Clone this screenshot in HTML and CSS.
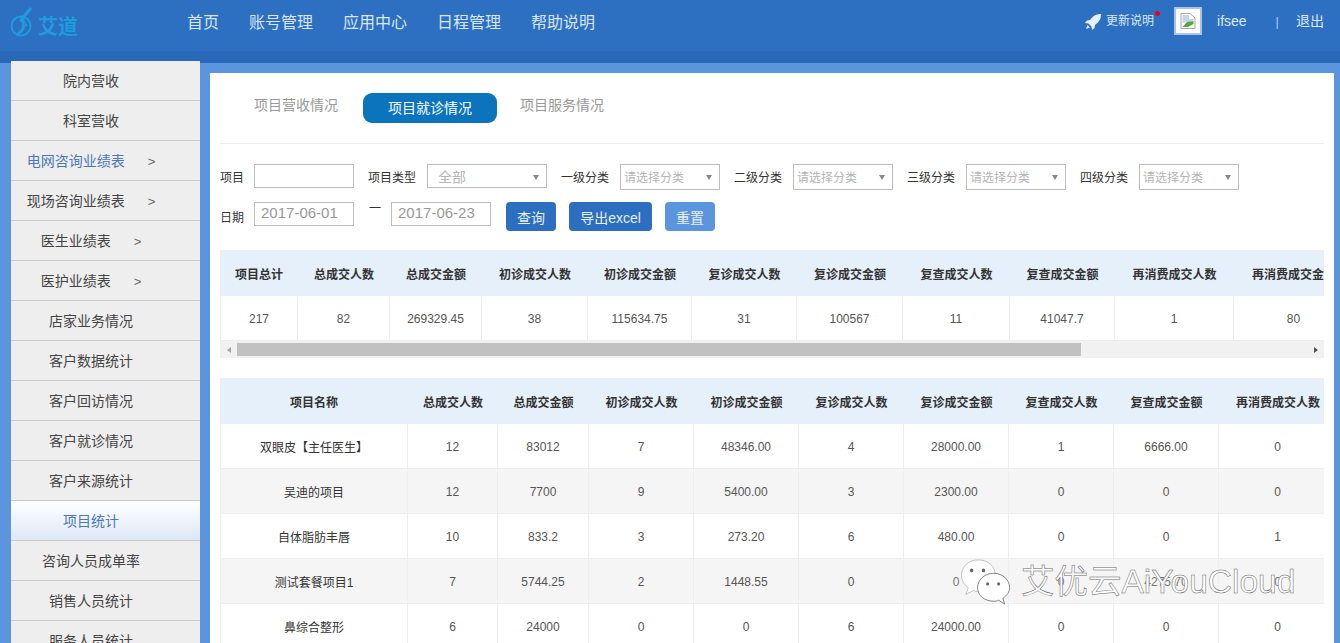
FILE: index.html
```html
<!DOCTYPE html>
<html lang="zh">
<head>
<meta charset="utf-8">
<title>项目统计</title>
<link rel="stylesheet" href="styles.css">
</head>
<body>
<header class="topbar">
  <div class="logo">
    <svg class="logo-mark" width="28" height="36" viewBox="0 0 28 36" fill="none" stroke="#1f9be0">
      <circle cx="11" cy="19" r="9.5" stroke-width="2"/>
      <path d="M8 27 C15 22 15 15 12 12 L21 1" stroke-width="3"/>
      <path d="M10 13 L17 19" stroke-width="2"/>
    </svg>
    <span class="logo-text">艾道</span>
  </div>
  <nav class="nav">
    <a>首页</a><a>账号管理</a><a>应用中心</a><a>日程管理</a><a>帮助说明</a>
  </nav>
  <div class="user">
    <svg class="rocket" width="16" height="16" viewBox="0 0 16 16" fill="#e6effa">
      <path d="M16 0 C11 0 8 2 5 6 L2 6.500 L0 9 L3.500 9.500 L6.500 12.500 L7 16 L9.500 14 L10 11 C14 8 16 5 16 0 Z"/>
      <path d="M2.500 11 L5 13.500 L1 15 Z"/>
    </svg>
    <span class="update">更新说明<i class="dot"></i></span>
    <span class="avatar">
      <svg width="16" height="16" viewBox="0 0 16 16">
        <path d="M1 .5 H10 L15 5 V15.500 H1 Z" fill="#fff" stroke="#a9a9a9"/>
        <path d="M2.500 2 H9 V6 H13.500 V8 L2.500 10 Z" fill="#c6d6f2"/>
        <path d="M2.500 14 L7 9 L13.500 8 V11 L8 14 Z" fill="#5aa53c"/>
      </svg>
    </span>
    <span class="uname">ifsee</span>
    <span class="sep">|</span>
    <span class="logout">退出</span>
  </div>
</header>

<main class="main">
  <aside class="side">
    <a class="side-item">院内营收</a>
    <a class="side-item">科室营收</a>
    <a class="side-item is-link">电网咨询业绩表<span class="caret">&gt;</span></a>
    <a class="side-item">现场咨询业绩表<span class="caret">&gt;</span></a>
    <a class="side-item">医生业绩表<span class="caret">&gt;</span></a>
    <a class="side-item">医护业绩表<span class="caret">&gt;</span></a>
    <a class="side-item">店家业务情况</a>
    <a class="side-item">客户数据统计</a>
    <a class="side-item">客户回访情况</a>
    <a class="side-item">客户就诊情况</a>
    <a class="side-item">客户来源统计</a>
    <a class="side-item is-active">项目统计</a>
    <a class="side-item">咨询人员成单率</a>
    <a class="side-item">销售人员统计</a>
    <a class="side-item">服务人员统计</a>
  </aside>

  <section class="panel">
    <div class="tabs">
      <a class="tab">项目营收情况</a>
      <a class="tab tab-on">项目就诊情况</a>
      <a class="tab">项目服务情况</a>
    </div>

    <div class="filter filter-a">
      <label class="lbl">项目</label>
      <input class="field w100" type="text">
      <label class="lbl">项目类型</label>
      <div class="field sel w120 big">全部</div>
      <label class="lbl">一级分类</label>
      <div class="field sel w100 tall">请选择分类</div>
      <label class="lbl">二级分类</label>
      <div class="field sel w100 tall">请选择分类</div>
      <label class="lbl">三级分类</label>
      <div class="field sel w100 tall">请选择分类</div>
      <label class="lbl">四级分类</label>
      <div class="field sel w100 tall">请选择分类</div>
    </div>

    <div class="filter filter-b">
      <label class="lbl">日期</label>
      <input class="field w100 date" type="text" value="2017-06-01">
      <span class="dash">一</span>
      <input class="field w100 date" type="text" value="2017-06-23">
      <button class="btn">查询</button>
      <button class="btn btn-wide">导出excel</button>
      <button class="btn btn-light">重置</button>
    </div>

    <div class="clip">
      <table class="grid sum">
        <colgroup>
          <col class="c78"><col class="c92"><col class="c92"><col class="c106"><col class="c104"><col class="c105"><col class="c106"><col class="c107"><col class="c105"><col class="c119"><col class="c120">
        </colgroup>
        <thead>
          <tr><th>项目总计</th><th>总成交人数</th><th>总成交金额</th><th>初诊成交人数</th><th>初诊成交金额</th><th>复诊成交人数</th><th>复诊成交金额</th><th>复查成交人数</th><th>复查成交金额</th><th>再消费成交人数</th><th>再消费成交金额</th></tr>
        </thead>
        <tbody>
          <tr><td>217</td><td>82</td><td>269329.45</td><td>38</td><td>115634.75</td><td>31</td><td>100567</td><td>11</td><td>41047.7</td><td>1</td><td>80</td></tr>
        </tbody>
      </table>
    </div>
    <div class="hscroll">
      <span class="arrow arrow-l"></span>
      <span class="thumb"></span>
      <span class="arrow arrow-r"></span>
    </div>

    <div class="clip list">
      <table class="grid detail">
        <colgroup>
          <col class="c188"><col class="c90"><col class="c91"><col class="c105"><col class="c105"><col class="c105"><col class="c105"><col class="c105"><col class="c105"><col class="c118">
        </colgroup>
        <thead>
          <tr><th>项目名称</th><th>总成交人数</th><th>总成交金额</th><th>初诊成交人数</th><th>初诊成交金额</th><th>复诊成交人数</th><th>复诊成交金额</th><th>复查成交人数</th><th>复查成交金额</th><th>再消费成交人数</th></tr>
        </thead>
        <tbody>
          <tr><td class="name">双眼皮【主任医生】</td><td>12</td><td>83012</td><td>7</td><td>48346.00</td><td>4</td><td>28000.00</td><td>1</td><td>6666.00</td><td>0</td></tr>
          <tr><td class="name">吴迪的项目</td><td>12</td><td>7700</td><td>9</td><td>5400.00</td><td>3</td><td>2300.00</td><td>0</td><td>0</td><td>0</td></tr>
          <tr><td class="name">自体脂肪丰唇</td><td>10</td><td>833.2</td><td>3</td><td>273.20</td><td>6</td><td>480.00</td><td>0</td><td>0</td><td>1</td></tr>
          <tr><td class="name">测试套餐项目1</td><td>7</td><td>5744.25</td><td>2</td><td>1448.55</td><td>0</td><td>0</td><td>0</td><td>4275.70</td><td>0</td></tr>
          <tr><td class="name">鼻综合整形</td><td>6</td><td>24000</td><td>0</td><td>0</td><td>6</td><td>24000.00</td><td>0</td><td>0</td><td>0</td></tr>
        </tbody>
      </table>
    </div>
  </section>
</main>

<div class="watermark">
  <svg class="wx" width="54" height="48" viewBox="0 0 64 50" preserveAspectRatio="none">
    <path d="M23 3 C11 3 3 10 3 19 C3 24 6 29 11 32 L8 39 L17 35 C19 35.500 21 36 23 36 C35 36 43 28 43 19 C43 10 35 3 23 3 Z" fill="#fff" stroke="#bbb"/>
    <circle cx="15" cy="14" r="2" fill="#666"/><circle cx="29" cy="14" r="2" fill="#666"/>
    <path d="M41 17 C30 17 22 24 22 32 C22 40 30 46 41 46 C43 46 45 46 47 45 L54 49 L52 43 C57 40 60 36 60 32 C60 24 52 17 41 17 Z" fill="#fff" stroke="#777"/>
    <circle cx="34" cy="28" r="1.800" fill="#666"/><circle cx="47" cy="28" r="1.800" fill="#666"/>
  </svg>
  <span class="wm-text">艾优云AiYouCloud</span>
</div>
</body>
</html>
```

FILE: styles.css
```css
* { box-sizing: border-box; }

html, body {
  margin: 0;
  height: 643px;
  overflow: hidden;
}

body {
  position: relative;
  font-family: "Liberation Sans", "Noto Sans CJK SC", sans-serif;
  font-size: 12px;
  color: #333;
  background: #5a95dd;
}

/* top bar */
.topbar {
  height: 61px;
  display: flex;
  background: linear-gradient(#2d6fc0 0, #2d6fc0 51px, #2a69b9 52px, #2a69b9 100%);
}

.logo {
  width: 187px;
  padding: 7px 0 0 10px;
  display: flex;
  align-items: flex-start;
}

.logo-text {
  margin: 8px 0 0 0;
  font-size: 20px;
  line-height: 24px;
  font-weight: 700;
  color: #1f9be0;
}

.nav {
  display: flex;
  gap: 30px;
  padding-top: 11px;
}

.nav a {
  font-size: 16px;
  line-height: 24px;
  color: #d9e6f6;
}

.user {
  margin-left: auto;
  display: flex;
  align-items: flex-start;
  padding: 7px 16px 0 0;
  color: #dde9f7;
}

.rocket {
  margin: 7px 5px 0 0;
}

.update {
  position: relative;
  margin-top: 1px;
  line-height: 26px;
  font-size: 12px;
}

.dot {
  position: absolute;
  top: 3px;
  right: -6px;
  width: 5px;
  height: 5px;
  border-radius: 50%;
  background: #e8001c;
}

.avatar {
  width: 28px;
  height: 28px;
  margin-left: 20px;
  border: 2px solid #a9c4e6;
  background: #fff;
  display: flex;
  align-items: center;
  justify-content: center;
}

.uname {
  margin: 1px 0 0 15px;
  font-size: 14px;
  line-height: 26px;
}

.sep {
  margin: 1px 0 0 29px;
  font-size: 13px;
  line-height: 28px;
  color: #a9d1f5;
}

.logout {
  margin: 1px 0 0 17px;
  font-size: 14px;
  line-height: 26px;
}

/* main area */
.main {
  display: flex;
  align-items: flex-start;
  padding-left: 11px;
  background: linear-gradient(#2a69b9 2px, #5a95dd 2px);
  height: 582px;
}

.side {
  width: 189px;
  flex: none;
}

.side-item {
  display: block;
  height: 40px;
  line-height: 40px;
  padding-right: 29px;
  text-align: center;
  font-size: 14px;
  color: #444;
  background: #eee;
  border-bottom: 1px solid #ccc;
}

.side-item.is-link { color: #4a78b8; }

.side-item.is-active {
  color: #4a78b8;
  background: linear-gradient(#fff, #dde8f6);
}

.caret {
  margin-left: 23px;
  font-size: 13px;
  color: #666;
}

.panel {
  width: 1124px;
  height: 570px;
  margin: 12px 0 0 10px;
  padding: 0 10px;
  background: #fff;
  flex: none;
}

.tabs {
  height: 71px;
  display: flex;
  align-items: flex-start;
  padding: 19px 0 0 34px;
  border-bottom: 1px solid #eee;
}

.tab {
  width: 84px;
  font-size: 14px;
  line-height: 27px;
  white-space: nowrap;
  color: #999;
}

.tab-on {
  width: 134px;
  height: 30px;
  line-height: 30px;
  margin: 1px 23px 0 25px;
  text-align: center;
  border-radius: 9px;
  color: #fff;
  background: #0b74bd;
}

.filter {
  display: flex;
  align-items: flex-start;
}

.filter-a {
  height: 25px;
  margin-top: 20px;
}

.filter-b {
  height: 29px;
  margin-top: 13px;
}

.lbl {
  align-self: center;
  margin-right: 10px;
  font-size: 12px;
  white-space: nowrap;
}

.field {
  height: 24px;
  margin: 0 14px 0 0;
  padding: 0 10px;
  border: 1px solid #bdbdbd;
  background: #fff;
  font: inherit;
  flex: none;
}

.w100 { width: 100px; }
.w120 { width: 120px; }

.sel {
  position: relative;
  margin-left: 1px;
  color: #b5b5b5;
  line-height: 24px;
  padding-left: 4px;
}

.sel::after {
  content: "";
  position: absolute;
  right: 7px;
  top: 10px;
  border: 3.500px solid transparent;
  border-top: 5px solid #888;
  border-bottom: 0;
}

.tall {
  height: 26px;
  line-height: 26px;
  padding-left: 3px;
}

.big {
  font-size: 14px;
  padding-left: 10px;
}

.date {
  font-size: 15px;
  color: #999;
  padding: 0 0 3px 6px;
}

.dash {
  margin: 2px 10px 0 1px;
  font-size: 12px;
  line-height: 10px;
}

.btn {
  width: 50px;
  height: 29px;
  margin: 0 13px 0 1px;
  padding: 0;
  border: 0;
  border-radius: 4px;
  font: inherit;
  font-size: 14px;
  color: #e8f0fa;
  background: #2c6ebf;
}

.btn-wide { width: 83px; margin-left: 0; }

.btn-light { background: #5a95dd; margin-left: 0; }

/* tables */
.clip {
  width: 1104px;
  overflow: hidden;
  margin-top: 19px;
}

.list {
  height: 300px;
  margin-top: 20px;
}

.grid {
  border-collapse: separate;
  border-spacing: 0;
  table-layout: fixed;
  text-align: center;
  font-size: 12px;
  color: #555;
}

.sum { width: 1134px; }
.detail { width: 1117px; }

.c78 { width: 78px; }
.c90 { width: 90px; }
.c91 { width: 91px; }
.c92 { width: 92px; }
.c104 { width: 104px; }
.c105 { width: 105px; }
.c106 { width: 106px; }
.c107 { width: 107px; }
.c118 { width: 118px; }
.c119 { width: 119px; }
.c120 { width: 120px; }
.c188 { width: 188px; }

.grid th {
  height: 46px;
  padding: 0;
  font-weight: 700;
  color: #333;
  background: #e6f0fb;
  white-space: nowrap;
  overflow: hidden;
}

.grid td {
  height: 45px;
  padding: 1px 0 0;
  border-right: 1px solid #eee;
  border-bottom: 1px solid #eee;
  white-space: nowrap;
  overflow: hidden;
}

.grid td.name {
  padding-top: 0;
  color: #333;
}

.grid td:first-child { border-left: 1px solid #eee; }

.detail tbody tr:nth-child(even) td { background: #f5f5f5; }

.hscroll {
  width: 1104px;
  height: 17px;
  display: flex;
  align-items: center;
  background: #f1f1f1;
}

.thumb {
  width: 844px;
  height: 13px;
  background: #c1c1c1;
}

.arrow {
  width: 17px;
  display: flex;
  justify-content: center;
}

.arrow::before {
  content: "";
  border: 3.500px solid transparent;
}

.arrow-l::before {
  border-right: 4px solid #a3a3a3;
  border-left: 0;
}

.arrow-r {
  margin-left: auto;
}

.arrow-r::before {
  border-left: 4px solid #505050;
  border-right: 0;
}

/* watermark lies over the table */
.watermark {
  position: absolute;
  left: 900px;
  top: 558px;
  width: 424px;
  height: 46px;
  background: rgba(245, 245, 245, .2);
}

.wx {
  position: absolute;
  left: 59px;
  top: -1px;
}

.wm-text {
  position: absolute;
  left: 121px;
  top: 2px;
  font-size: 33.500px;
  line-height: 44px;
  white-space: nowrap;
  color: #fff;
  -webkit-text-stroke: .5px #666;
}
```
